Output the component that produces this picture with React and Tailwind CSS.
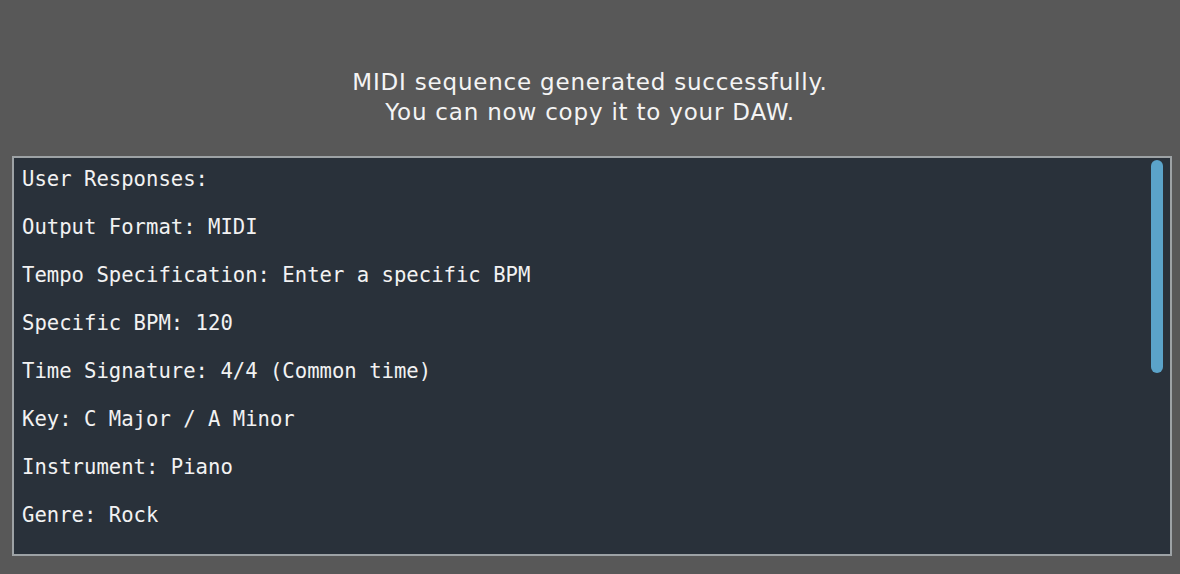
const lines = [
  "User Responses:",
  "Output Format: MIDI",
  "Tempo Specification: Enter a specific BPM",
  "Specific BPM: 120",
  "Time Signature: 4/4 (Common time)",
  "Key: C Major / A Minor",
  "Instrument: Piano",
  "Genre: Rock",
  "Length of the sequence: 8 bars",
  "Mood: Energetic",
  "Complexity: Moderate",
  "Generated MIDI Sequence:",
  "Track 1: Piano",
  "Bar 1: C4 E4 G4 C5",
  "Bar 2: A3 C4 E4 A4",
  "Bar 3: F3 A3 C4 F4",
];

export default function App() {
  return (
    <div className="h-screen w-full bg-[#585858] flex flex-col overflow-hidden">
      {/* Status message */}
      <div
        className="pt-[67px] mb-[29px] text-center text-[#f4f4f4] text-[23px] leading-[30px] tracking-[0.8px]"
        style={{ fontFamily: '"DejaVu Sans", Verdana, sans-serif' }}
      >
        <p>MIDI sequence generated successfully.</p>
        <p>You can now copy it to your DAW.</p>
      </div>

      {/* Output box */}
      <div className="relative ml-3 mr-2 h-[400px] border-2 border-[#9da2a5] bg-[#29313a] overflow-hidden">
        <pre
          className="pt-[9px] px-2 text-[20.6px] leading-[24px] text-[#f2f2f2] whitespace-pre-wrap"
          style={{ fontFamily: '"DejaVu Sans Mono", "Liberation Mono", monospace' }}
        >
          {lines.join("\n\n")}
        </pre>

        {/* Scrollbar thumb */}
        <div className="absolute right-[7px] top-[2px] w-[12px] h-[213px] rounded-full bg-[#5ba3c9]" />
      </div>
    </div>
  );
}
